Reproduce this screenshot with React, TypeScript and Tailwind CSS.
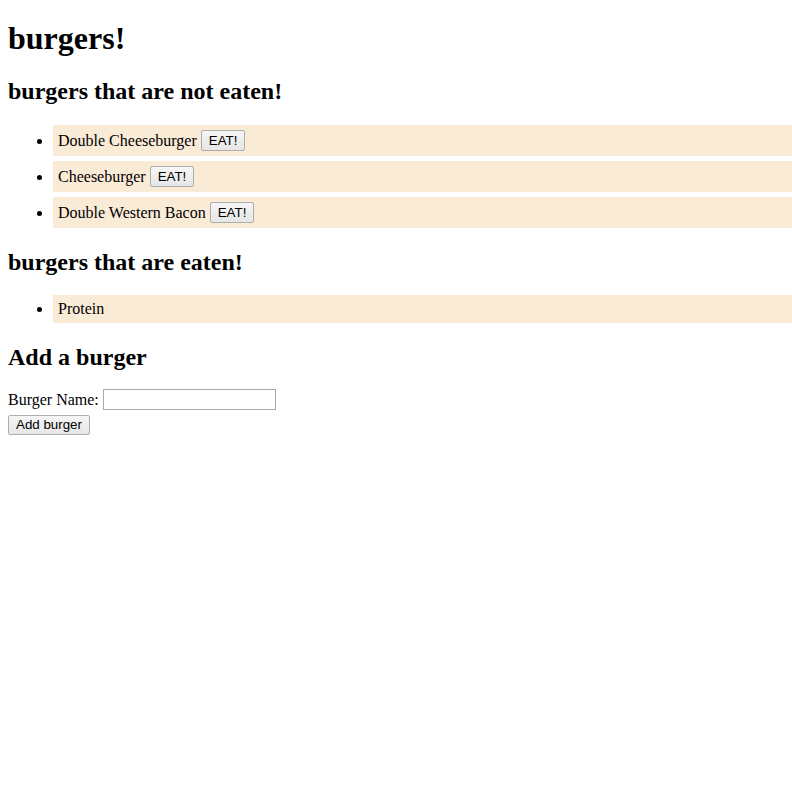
const notEaten = ["Double Cheeseburger", "Cheeseburger", "Double Western Bacon"];
const eaten = ["Protein"];

function SmallButton({ children }: { children: React.ReactNode }) {
  return (
    <button className="inline-block align-top rounded-[2px] border border-[#adadad] bg-gradient-to-b from-[#f6f6f6] to-[#e6e6e6] px-[7px] py-[2px] font-['Liberation_Sans',Arial,sans-serif] text-[13.33px] leading-[15px] text-black">
      {children}
    </button>
  );
}

export default function App() {
  return (
    <div className="px-2 pb-4 font-['Liberation_Serif','Times_New_Roman',serif] text-[16px] leading-[normal] text-black">
      <h1 className="mt-[20px] mb-[21px] text-[32px] font-bold leading-[normal]">burgers!</h1>

      <h2 className="mt-[20px] mb-[20px] text-[24px] font-bold leading-[normal]">burgers that are not eaten!</h2>
      <ul className="my-4 list-disc pl-10">
        {notEaten.map((name) => (
          <li key={name} className="my-[5px] -mr-2 ml-[5px] bg-[#faebd7] p-[5px] leading-[21px]">
            {name} <SmallButton>EAT!</SmallButton>
          </li>
        ))}
      </ul>

      <h2 className="mt-[21px] mb-[19px] text-[24px] font-bold leading-[normal]">burgers that are eaten!</h2>
      <ul className="my-4 list-disc pl-10">
        {eaten.map((name) => (
          <li key={name} className="my-[5px] -mr-2 ml-[5px] bg-[#faebd7] p-[5px] leading-[18px]">
            {name}
          </li>
        ))}
      </ul>

      <h2 className="mt-[21px] mb-[18px] text-[24px] font-bold leading-[normal]">Add a burger</h2>
      <form onSubmit={(e) => e.preventDefault()}>
        <div className="flex items-center">
          <label htmlFor="burger">Burger Name:</label>
          <input
            id="burger"
            type="text"
            className="ml-[4px] h-[21px] w-[173px] border border-[#a9a9a9] px-[2px] font-['Liberation_Sans',Arial,sans-serif] text-[13.33px] outline-none"
          />
        </div>
        <button
          type="submit"
          className="mt-[5px] h-[20px] rounded-[2px] border border-[#adadad] bg-gradient-to-b from-[#f6f6f6] to-[#e6e6e6] px-[7px] font-['Liberation_Sans',Arial,sans-serif] text-[13.33px] leading-[16px] text-black"
        >
          Add burger
        </button>
      </form>
    </div>
  );
}
